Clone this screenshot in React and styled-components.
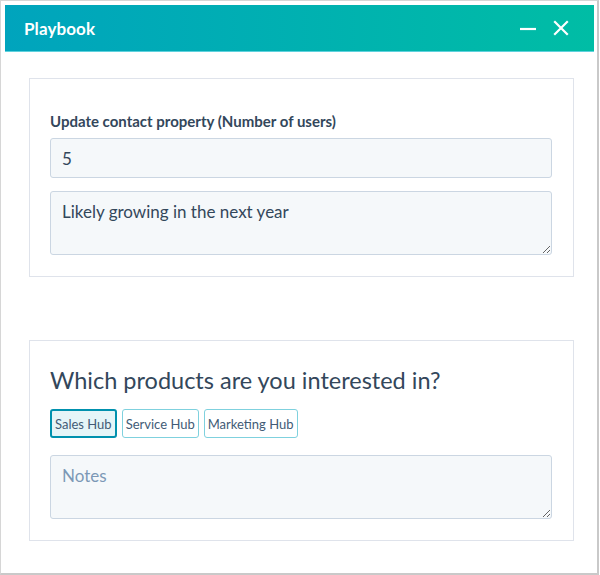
import React from 'react'
import styled, { createGlobalStyle } from 'styled-components';

const GlobalStyle = createGlobalStyle`
    html, body {
        margin: 0;
        padding: 0;
        background: #ffffff;
    }
    body {
        font-family: Lato, "Open Sans", "Liberation Sans", sans-serif;
        color: #33475b;
    }
`;

const Window = styled.div`
    box-sizing: border-box;
    width: 599px;
    height: 575px;
    border: 1px solid #d6d6d6;
    border-right: 2px solid #c9c9c9;
    border-bottom: 2px solid #c9c9c9;
    padding: 4px 3px 0 4px;
    display: flex;
    flex-direction: column;
    background: #ffffff;
`;

const Header = styled.div`
    height: 47px;
    flex-shrink: 0;
    display: flex;
    align-items: center;
    justify-content: space-between;
    padding: 0 25px 0 19px;
    background: linear-gradient(90deg, #00a4bd 0%, #00bda5 100%);
    border-bottom: 1px solid #5fd1dd;
    box-sizing: border-box;
`;

const Title = styled.h1`
    margin: 0;
    font-size: 17px;
    font-weight: 700;
    color: #ffffff;
    letter-spacing: 0.1px;
`;

const Controls = styled.div`
    display: flex;
    align-items: center;
    gap: 17px;
`;

const IconButton = styled.button`
    background: none;
    border: none;
    padding: 0;
    width: 16px;
    height: 16px;
    display: flex;
    align-items: center;
    justify-content: center;
    cursor: pointer;
`;

const Body = styled.div`
    padding: 26px 20px 0 24px;
    display: flex;
    flex-direction: column;
    gap: 63px;
`;

const Card = styled.section`
    border: 1px solid #dfe3eb;
    padding: ${props => props.top}px 21px 21px 20px;
    display: flex;
    flex-direction: column;
`;

const Label = styled.label`
    font-size: 15px;
    font-weight: 700;
    line-height: 20px;
    margin-bottom: 7px;
    color: #33475b;
`;

const Input = styled.input`
    box-sizing: border-box;
    height: 40px;
    width: 100%;
    border: 1px solid #cbd6e2;
    border-radius: 3px;
    background: #f5f8fa;
    padding: 0 11px;
    font-family: inherit;
    font-size: 17px;
    color: #33475b;
    outline: none;
`;

const TextArea = styled.textarea`
    box-sizing: border-box;
    display: block;
    height: 64px;
    width: 100%;
    margin-top: ${props => props.gap}px;
    border: 1px solid #cbd6e2;
    border-radius: 3px;
    background: #f5f8fa;
    padding: 8px 11px;
    font-family: inherit;
    font-size: 17px;
    line-height: 24px;
    color: #33475b;
    outline: none;
    resize: vertical;
    &::placeholder {
        color: #7c98b6;
        opacity: 1;
    }
`;

const Question = styled.h2`
    margin: 0 0 14px;
    font-size: 23.5px;
    font-weight: 400;
    line-height: 30px;
    color: #33475b;
`;

const Options = styled.div`
    display: flex;
    gap: 5px;
`;

const Option = styled.button`
    box-sizing: border-box;
    height: 29px;
    padding: 0 ${props => props.selected ? 3 : 3}px;
    border: ${props => props.selected ? '2px solid #0091ae' : '1px solid #7fd1de'};
    border-radius: 3px;
    background: ${props => props.selected ? '#e5f5f8' : '#ffffff'};
    font-family: inherit;
    font-size: 13px;
    color: #425b76;
    cursor: pointer;
`;

const products = ['Sales Hub', 'Service Hub', 'Marketing Hub'];

export default function App() {
    return (
        <>
            <GlobalStyle />
            <Window>
                <Header>
                    <Title>Playbook</Title>
                    <Controls>
                        <IconButton aria-label="Minimize">
                            <svg width="16" height="16" viewBox="0 0 16 16">
                                <path d="M1 9h14" stroke="#ffffff" strokeWidth="2.2" strokeLinecap="square" />
                            </svg>
                        </IconButton>
                        <IconButton aria-label="Close">
                            <svg width="16" height="16" viewBox="0 0 16 16">
                                <path d="M2 2l12 12M14 2L2 14" stroke="#ffffff" strokeWidth="2.2" strokeLinecap="square" />
                            </svg>
                        </IconButton>
                    </Controls>
                </Header>
                <Body>
                    <Card top={32}>
                        <Label>Update contact property (Number of users)</Label>
                        <Input defaultValue="5" />
                        <TextArea gap={13} defaultValue="Likely growing in the next year" />
                    </Card>
                    <Card top={24}>
                        <Question>Which products are you interested in?</Question>
                        <Options>
                            {products.map((p, i) => (
                                <Option key={p} selected={i === 0}>{p}</Option>
                            ))}
                        </Options>
                        <TextArea gap={17} placeholder="Notes" />
                    </Card>
                </Body>
            </Window>
        </>
    )
}
